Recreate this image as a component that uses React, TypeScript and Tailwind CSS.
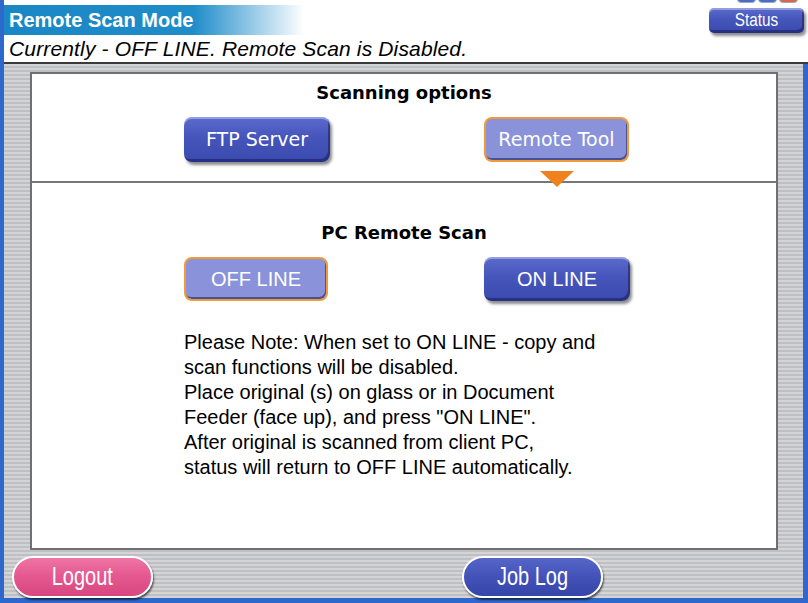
import React from 'react';

const sans = "font-['Liberation_Sans',Arial,sans-serif]";
const verdana = "font-['DejaVu_Sans',Verdana,sans-serif]";

const darkBtn =
  'bg-[linear-gradient(to_bottom,#5b6bcc_0%,#4555bb_45%,#3a4aad_100%)] shadow-[inset_0_2px_0_rgba(255,255,255,0.35),inset_-2px_-3px_0_rgba(25,30,90,0.55),2px_3px_3px_rgba(0,0,0,0.45)]';
const lightBtn =
  'bg-[#8a93d9] border-2 border-[#f09a3a] shadow-[inset_-1px_-2px_0_rgba(40,45,110,0.65)]';

const App: React.FC = () => {
  return (
    <div className="w-[808px] h-[603px] overflow-hidden bg-white border-l-4 border-[#2f68cc] flex flex-col relative">
      {/* window buttons peeking from the top */}
      <div className="h-[5px] relative">
        <div className="absolute right-[10px] top-[-5px] flex gap-[2px]">
          <div className="w-[19px] h-[8px] rounded-[4px] border border-[#9ab] bg-[#4a6cc8]" />
          <div className="w-[19px] h-[8px] rounded-[4px] border border-[#9ab] bg-[#4a6cc8]" />
          <div className="w-[19px] h-[8px] rounded-[4px] border border-[#9ab] bg-[#d9684a]" />
        </div>
      </div>

      {/* title bar */}
      <div className="h-[30px] flex items-center justify-between bg-[linear-gradient(to_right,#1b86c4_0px,#1f8dca_190px,#ffffff_300px)]">
        <span className={`${sans} text-[20px] font-bold text-white pl-[5px] leading-none`}>Remote Scan Mode</span>
        <button
          className={`${sans} mr-[4px] w-[95px] h-[25px] rounded-[5px] text-white text-[18px] leading-none ${darkBtn}`}
        >
          <span className="inline-block scale-x-[0.85]">Status</span>
        </button>
      </div>

      {/* status line */}
      <div className="h-[27px] flex items-center">
        <span className={`${sans} italic text-[21px] tracking-[0.15px] text-black pl-[5px] leading-none`}>
          Currently - OFF LINE. Remote Scan is Disabled.
        </span>
      </div>
      <div className="h-[2px] bg-[#3a3a3a]" />

      {/* grey area */}
      <div className="flex-1 flex flex-col border-r-[5px] border-b-[5px] border-[#2f68cc] bg-[image:repeating-linear-gradient(to_bottom,#d4d4d6_0px,#d4d4d6_2px,#bfc0c3_2px,#bfc0c3_4px)]">
        <div className="mt-[8px] ml-[26px] w-[748px] h-[478px] border-2 border-[#707070] bg-white flex flex-col">
          {/* scanning options */}
          <div className="border-b-2 border-[#777] pt-[8px] pb-[19px] flex flex-col items-center">
            <div className={`${verdana} font-bold text-[18px] leading-[22px] text-black`}>Scanning options</div>
            <div className="mt-[13px] flex gap-[154px] pl-[5px]">
              <button className={`${verdana} w-[146px] h-[45px] rounded-[8px] text-white text-[19px] ${darkBtn}`}>
                FTP Server
              </button>
              <div className="relative">
                <button className={`${verdana} w-[145px] h-[45px] rounded-[8px] text-white text-[19px] ${lightBtn}`}>
                  Remote Tool
                </button>
                <svg
                  className="absolute left-1/2 -translate-x-1/2 top-[54px]"
                  width="34"
                  height="16"
                  viewBox="0 0 34 16"
                >
                  <polygon points="0,0 34,0 17,16" fill="#f0821e" />
                </svg>
              </div>
            </div>
          </div>

          {/* PC remote scan */}
          <div className="pt-[39px] flex flex-col items-center">
            <div className={`${verdana} font-bold text-[18px] leading-[22px] text-black`}>PC Remote Scan</div>
            <div className="mt-[13px] flex gap-[156px] pl-[6px]">
              <button className={`${sans} w-[144px] h-[44px] rounded-[8px] text-white text-[20px] ${lightBtn}`}>
                OFF LINE
              </button>
              <button className={`${sans} w-[146px] h-[44px] rounded-[8px] text-white text-[20px] ${darkBtn}`}>
                ON LINE
              </button>
            </div>
          </div>
          <div className={`${sans} mt-[29px] pl-[152px] text-[20px] leading-[25px] text-black`}>
            <p>Please Note: When set to ON LINE - copy and</p>
            <p>scan functions will be disabled.</p>
            <p>Place original (s) on glass or in Document</p>
            <p>Feeder (face up), and press "ON LINE".</p>
            <p>After original is scanned from client PC,</p>
            <p>status will return to OFF LINE automatically.</p>
          </div>
        </div>

        {/* bottom buttons */}
        <div className="mt-[6px] ml-[8px] flex gap-[309px]">
          <button
            className={`${sans} w-[141px] h-[42px] rounded-full border-2 border-white text-white text-[25px] bg-[linear-gradient(to_bottom,#ef74a4_0%,#e4578f_50%,#d8477f_100%)] shadow-[1px_2px_2px_rgba(0,0,0,0.6)]`}
          >
            <span className="inline-block scale-x-[0.8]">Logout</span>
          </button>
          <button
            className={`${sans} w-[141px] h-[42px] rounded-full border-2 border-white text-white text-[25px] bg-[linear-gradient(to_bottom,#5566c8_0%,#4252b8_50%,#3545a8_100%)] shadow-[1px_2px_2px_rgba(0,0,0,0.6)]`}
          >
            <span className="inline-block scale-x-[0.8]">Job Log</span>
          </button>
        </div>
      </div>
    </div>
  );
};

export default App;
